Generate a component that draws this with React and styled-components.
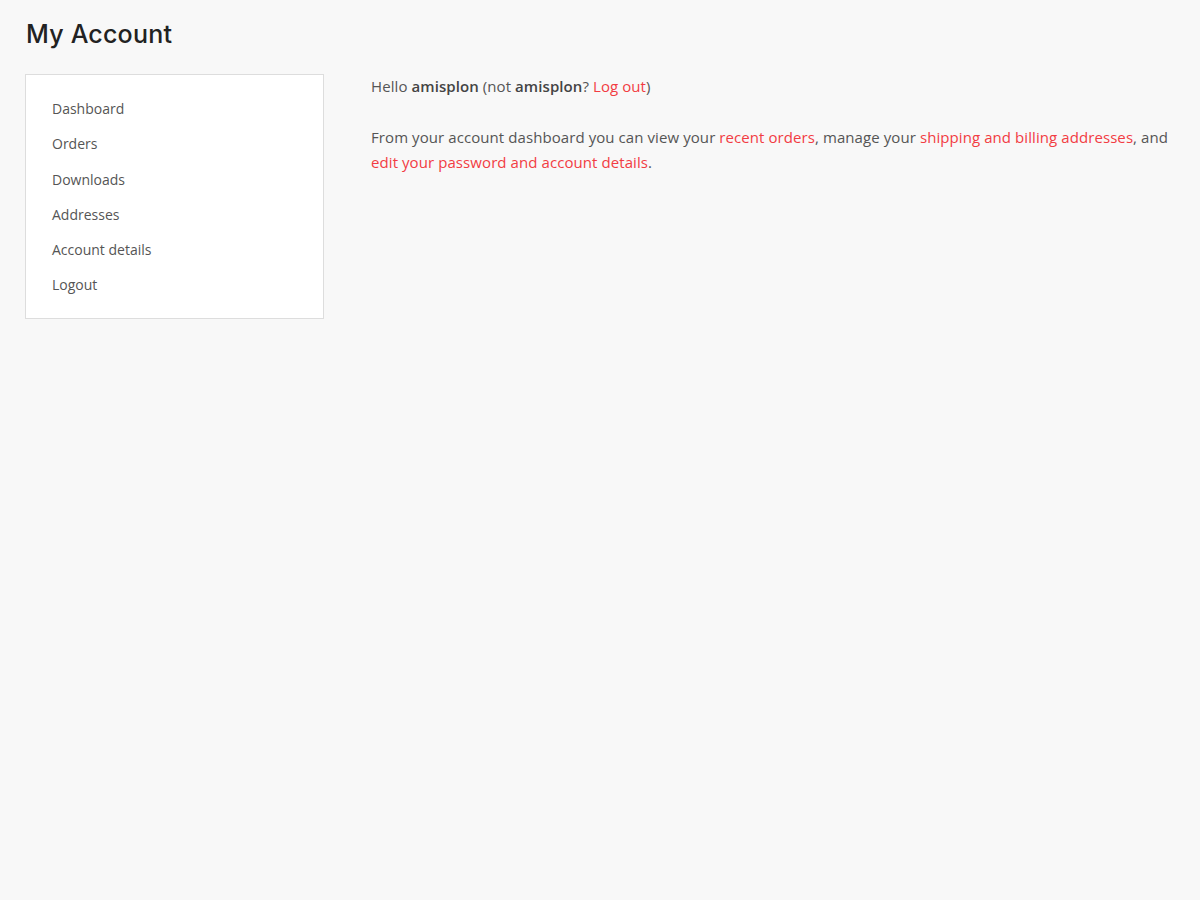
import React from 'react'
import styled, { createGlobalStyle } from 'styled-components'

const GlobalStyle = createGlobalStyle`
  html, body {
    margin: 0;
    padding: 0;
    background: #f8f8f8;
  }
  body {
    font-family: 'Open Sans', 'Liberation Sans', sans-serif;
    color: #555;
  }
`

const Page = styled.div`
  padding: 16px 25px;
  min-height: 900px;
  box-sizing: border-box;
`

const Title = styled.h1`
  margin: 0 0 22px 1px;
  font-family: 'Inter', 'Liberation Sans', sans-serif;
  font-weight: 500;
  font-size: 25px;
  line-height: 36px;
  color: #222;
  letter-spacing: 0.2px;
`

const Layout = styled.div`
  display: flex;
  align-items: flex-start;
  gap: 47px;
`

const Nav = styled.ul`
  list-style: none;
  margin: 0;
  width: 299px;
  box-sizing: border-box;
  padding: 16px 0 15px;
  background: #fff;
  border: 1px solid #ddd;
  flex-shrink: 0;
`

const NavItem = styled.li`
  padding: 0 26px;
  font-size: 14px;
  line-height: 35.3px;
  color: #555;
  cursor: pointer;
`

const Content = styled.div`
  flex: 1;
  font-size: 15px;
  line-height: 25.5px;
  letter-spacing: 0.08px;
  color: #555;
`

const Para = styled.p`
  margin: 0 0 25px;
`

const Link = styled.a`
  color: #f23c43;
  text-decoration: none;
  cursor: pointer;
`

const Strong = styled.strong`
  font-weight: 600;
  color: #444;
`

const navItems = ['Dashboard', 'Orders', 'Downloads', 'Addresses', 'Account details', 'Logout']

const App = () => {
  return (
    <>
      <GlobalStyle />
      <Page>
        <Title>My Account</Title>
        <Layout>
          <Nav>
            {navItems.map((item) => (
              <NavItem key={item}>{item}</NavItem>
            ))}
          </Nav>
          <Content>
            <Para>
              Hello <Strong>amisplon</Strong> (not <Strong>amisplon</Strong>? <Link>Log out</Link>)
            </Para>
            <Para>
              From your account dashboard you can view your <Link>recent orders</Link>, manage your{' '}
              <Link>shipping and billing addresses</Link>, and <Link>edit your password and account details</Link>.
            </Para>
          </Content>
        </Layout>
      </Page>
    </>
  )
}

export default App
